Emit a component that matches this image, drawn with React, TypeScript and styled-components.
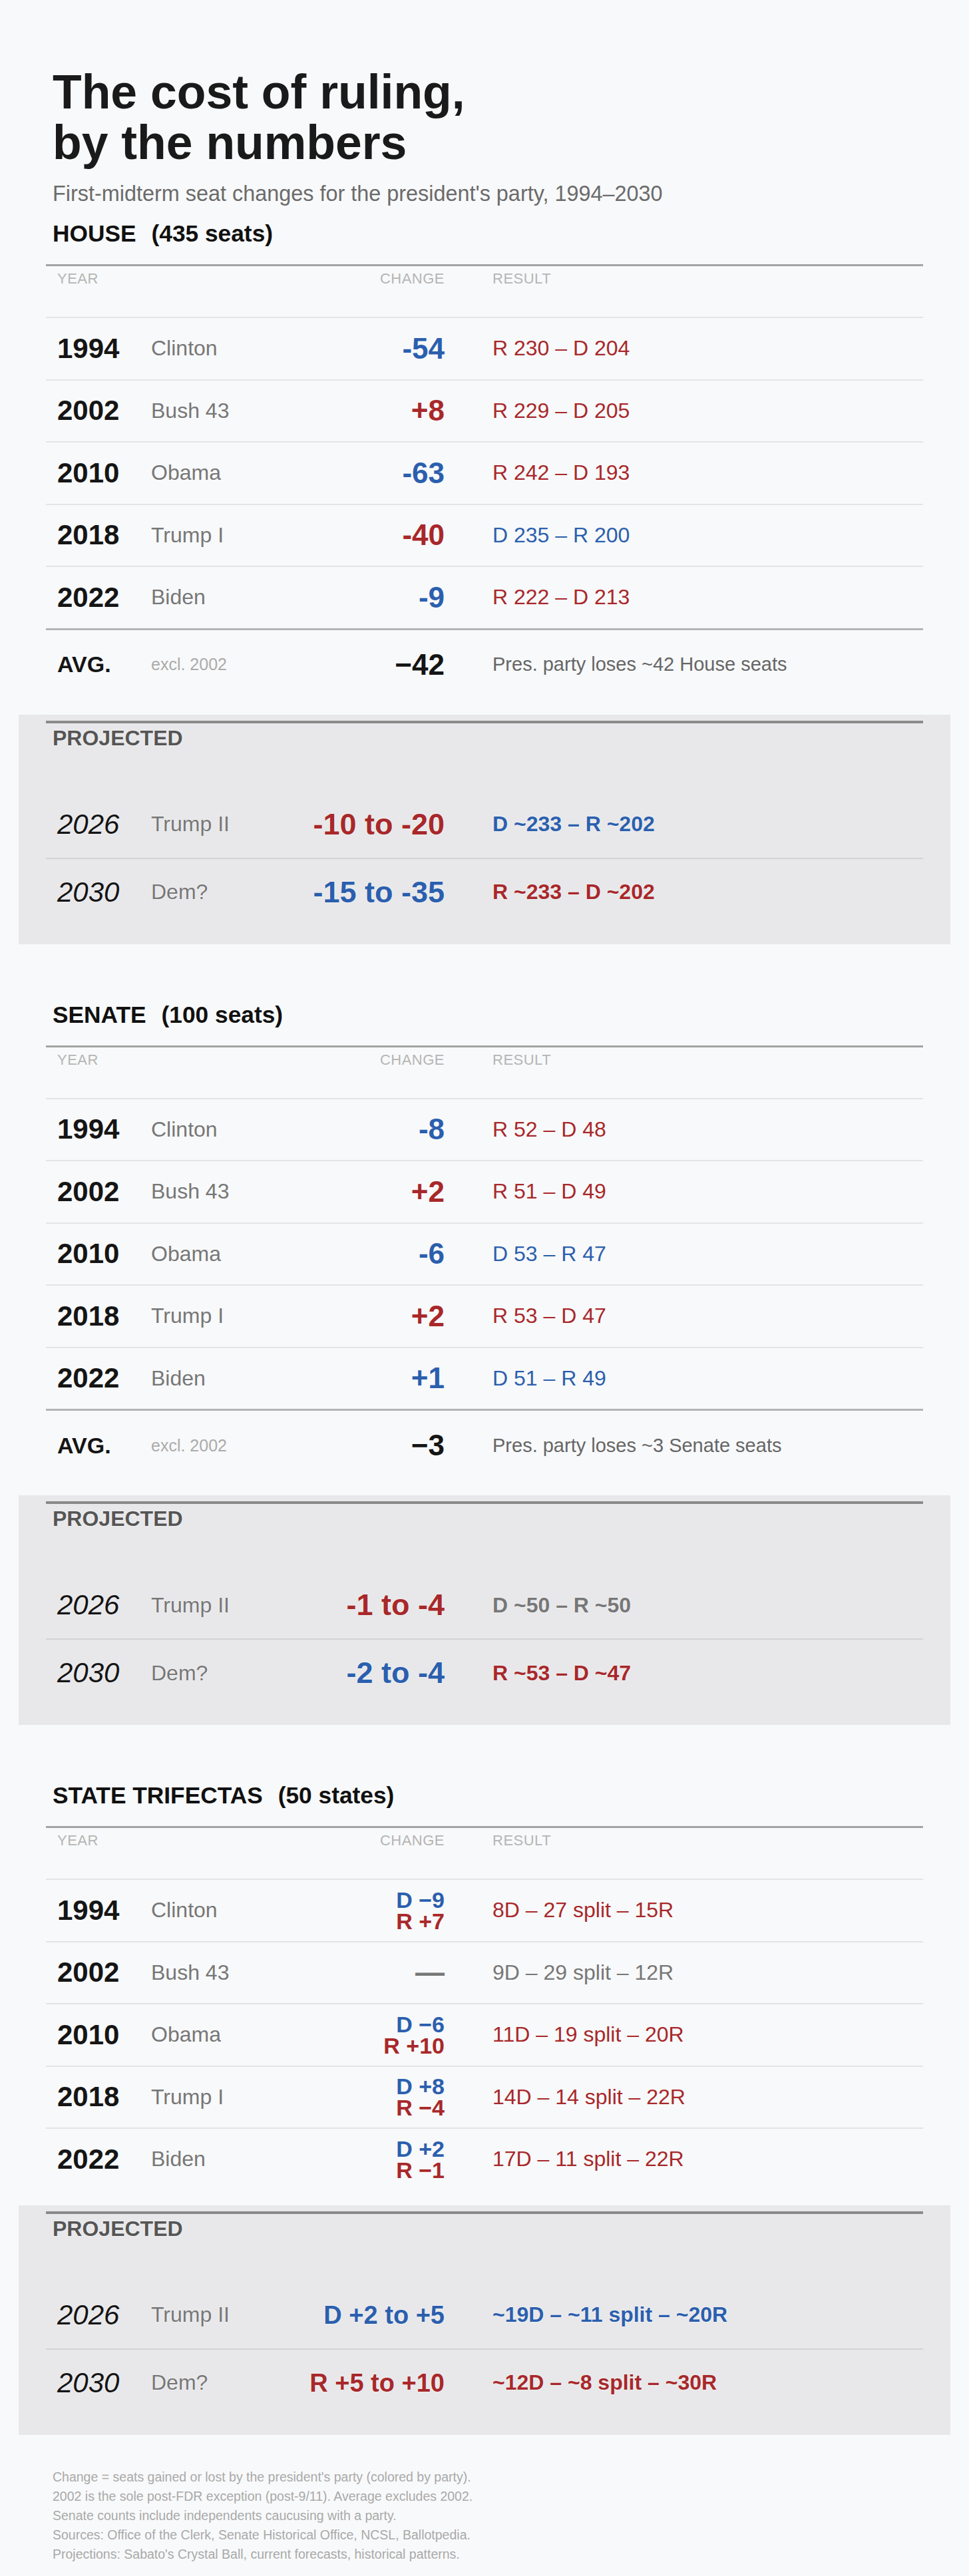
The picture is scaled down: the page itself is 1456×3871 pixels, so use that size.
import styled, { createGlobalStyle, css } from "styled-components";

type Party = "dem" | "rep" | "neutral";

const partyColor: Record<Party, string> = {
	dem: "#2b5fae",
	rep: "#a8282a",
	neutral: "#777777",
};

interface ChangeLine {
	text: string;
	party: Party;
}

interface HistoryRow {
	year: string;
	president: string;
	change: ChangeLine[];
	result: string;
	resultParty: Party;
}

interface ProjectedRow {
	year: string;
	president: string;
	change: string;
	changeParty: Party;
	result: string;
	resultParty: Party;
}

interface Chamber {
	title: string;
	count: string;
	rows: HistoryRow[];
	avg?: { value: string; note: string };
	projected: ProjectedRow[];
	compact?: boolean;
}

const one = (text: string, party: Party): ChangeLine[] => [{ text, party }];

const chambers: Chamber[] = [
	{
		title: "HOUSE",
		count: "(435 seats)",
		rows: [
			{ year: "1994", president: "Clinton", change: one("-54", "dem"), result: "R 230 – D 204", resultParty: "rep" },
			{ year: "2002", president: "Bush 43", change: one("+8", "rep"), result: "R 229 – D 205", resultParty: "rep" },
			{ year: "2010", president: "Obama", change: one("-63", "dem"), result: "R 242 – D 193", resultParty: "rep" },
			{ year: "2018", president: "Trump I", change: one("-40", "rep"), result: "D 235 – R 200", resultParty: "dem" },
			{ year: "2022", president: "Biden", change: one("-9", "dem"), result: "R 222 – D 213", resultParty: "rep" },
		],
		avg: { value: "−42", note: "Pres. party loses ~42 House seats" },
		projected: [
			{ year: "2026", president: "Trump II", change: "-10 to -20", changeParty: "rep", result: "D ~233 – R ~202", resultParty: "dem" },
			{ year: "2030", president: "Dem?", change: "-15 to -35", changeParty: "dem", result: "R ~233 – D ~202", resultParty: "rep" },
		],
	},
	{
		title: "SENATE",
		count: "(100 seats)",
		rows: [
			{ year: "1994", president: "Clinton", change: one("-8", "dem"), result: "R 52 – D 48", resultParty: "rep" },
			{ year: "2002", president: "Bush 43", change: one("+2", "rep"), result: "R 51 – D 49", resultParty: "rep" },
			{ year: "2010", president: "Obama", change: one("-6", "dem"), result: "D 53 – R 47", resultParty: "dem" },
			{ year: "2018", president: "Trump I", change: one("+2", "rep"), result: "R 53 – D 47", resultParty: "rep" },
			{ year: "2022", president: "Biden", change: one("+1", "dem"), result: "D 51 – R 49", resultParty: "dem" },
		],
		avg: { value: "−3", note: "Pres. party loses ~3 Senate seats" },
		projected: [
			{ year: "2026", president: "Trump II", change: "-1 to -4", changeParty: "rep", result: "D ~50 – R ~50", resultParty: "neutral" },
			{ year: "2030", president: "Dem?", change: "-2 to -4", changeParty: "dem", result: "R ~53 – D ~47", resultParty: "rep" },
		],
	},
	{
		title: "STATE TRIFECTAS",
		count: "(50 states)",
		compact: true,
		rows: [
			{
				year: "1994",
				president: "Clinton",
				change: [
					{ text: "D −9", party: "dem" },
					{ text: "R +7", party: "rep" },
				],
				result: "8D – 27 split – 15R",
				resultParty: "rep",
			},
			{ year: "2002", president: "Bush 43", change: one("—", "neutral"), result: "9D – 29 split – 12R", resultParty: "neutral" },
			{
				year: "2010",
				president: "Obama",
				change: [
					{ text: "D −6", party: "dem" },
					{ text: "R +10", party: "rep" },
				],
				result: "11D – 19 split – 20R",
				resultParty: "rep",
			},
			{
				year: "2018",
				president: "Trump I",
				change: [
					{ text: "D +8", party: "dem" },
					{ text: "R −4", party: "rep" },
				],
				result: "14D – 14 split – 22R",
				resultParty: "rep",
			},
			{
				year: "2022",
				president: "Biden",
				change: [
					{ text: "D +2", party: "dem" },
					{ text: "R −1", party: "rep" },
				],
				result: "17D – 11 split – 22R",
				resultParty: "rep",
			},
		],
		projected: [
			{ year: "2026", president: "Trump II", change: "D +2 to +5", changeParty: "dem", result: "~19D – ~11 split – ~20R", resultParty: "dem" },
			{ year: "2030", president: "Dem?", change: "R +5 to +10", changeParty: "rep", result: "~12D – ~8 split – ~30R", resultParty: "rep" },
		],
	},
];

const notes = [
	"Change = seats gained or lost by the president's party (colored by party).",
	"2002 is the sole post-FDR exception (post-9/11). Average excludes 2002.",
	"Senate counts include independents caucusing with a party.",
	"Sources: Office of the Clerk, Senate Historical Office, NCSL, Ballotpedia.",
	"Projections: Sabato's Crystal Ball, current forecasts, historical patterns.",
];

const GlobalStyle = createGlobalStyle`
	html, body {
		margin: 0;
		padding: 0;
		background: #f8f9fa;
	}
	body {
		font-family: "Liberation Sans", Arial, Helvetica, sans-serif;
		color: #1a1a1a;
	}
`;

const Page = styled.main`
	padding: 100px 28px 24px;
`;

const Intro = styled.header`
	padding: 0 51px;
`;

const Title = styled.h1`
	margin: 0;
	font-size: 71.5px;
	line-height: 76px;
	font-weight: 700;
	color: #1a1a1a;
`;

const Subtitle = styled.p`
	margin: 20px 0 0;
	font-size: 32.4px;
	line-height: 38px;
	color: #6b6b6b;
`;

const Section = styled.section`
	margin-top: 20px;

	& + & {
		margin-top: 85px;
	}
`;

const SectionTitle = styled.h2`
	margin: 0 0 25px;
	padding: 0 51px;
	font-size: 35.3px;
	line-height: 42px;
	font-weight: 700;
	color: #111111;
`;

const Count = styled.span`
	margin-left: 23px;
`;

const Table = styled.div`
	margin: 0 41px;
	border-top: 3px solid #a3a3a3;
`;

const gridColumns = css`
	display: grid;
	grid-template-columns: 141px 222px 219px 1fr;
	padding: 0 17px;
`;

const HeadRow = styled.div`
	${gridColumns};
	padding-top: 6px;
	padding-bottom: 45px;
	border-bottom: 2px solid #e4e4e6;
	font-size: 22px;
	line-height: 25px;
	color: #b5b5b5;
	letter-spacing: 0.5px;
`;

const ChangeHead = styled.span`
	grid-column: 3;
	text-align: right;
`;

const ResultHead = styled.span`
	grid-column: 4;
	padding-left: 72px;
`;

const Row = styled.div<{ $edge: "thin" | "thick" | "none" }>`
	${gridColumns};
	min-height: 91.5px;
	align-items: center;
	border-bottom: ${(p) =>
		p.$edge === "thin" ? "2px solid #e4e4e6" : p.$edge === "thick" ? "3px solid #b4b4b4" : "none"};
`;

const AvgRow = styled.div`
	${gridColumns};
	min-height: 104px;
	align-items: center;
`;

const Year = styled.span<{ $projected?: boolean }>`
	font-size: 42px;
	line-height: 48px;
	font-weight: ${(p) => (p.$projected ? 400 : 700)};
	font-style: ${(p) => (p.$projected ? "italic" : "normal")};
	color: #151515;
`;

const AvgLabel = styled.span`
	font-size: 34px;
	font-weight: 700;
	color: #151515;
`;

const President = styled.span`
	font-size: 32px;
	color: #777777;
`;

const Excl = styled.span`
	font-size: 25px;
	color: #ababab;
`;

const Change = styled.div`
	display: flex;
	flex-direction: column;
	align-items: flex-end;
	text-align: right;
`;

const ChangeText = styled.span<{ $party: Party; $size: number; $lead: number }>`
	font-size: ${(p) => p.$size}px;
	line-height: ${(p) => p.$lead}px;
	font-weight: 700;
	color: ${(p) => partyColor[p.$party]};
	white-space: nowrap;
`;

const AvgValue = styled.span`
	font-size: 44px;
	font-weight: 700;
	color: #151515;
	text-align: right;
`;

const Result = styled.span<{ $party: Party; $bold?: boolean }>`
	padding-left: 72px;
	font-size: 32px;
	font-weight: ${(p) => (p.$bold ? 700 : 400)};
	color: ${(p) => partyColor[p.$party]};
	white-space: nowrap;
`;

const AvgNote = styled.span`
	padding-left: 72px;
	font-size: 29px;
	color: #666666;
`;

const Projected = styled.div`
	margin-top: 23px;
	padding: 9px 41px 28px;
	background: #e8e8ea;
	text-shadow: 0 0 2px rgba(255, 255, 255, 0.9);
`;

const ProjectedInner = styled.div`
	border-top: 4px solid #8a8a8a;
`;

const ProjectedLabel = styled.div`
	margin: 4px 0 61px;
	padding-left: 10px;
	font-size: 32px;
	line-height: 37px;
	font-weight: 700;
	color: #555555;
`;

const ProjRow = styled.div<{ $last?: boolean }>`
	${gridColumns};
	min-height: 100px;
	align-items: center;
	border-bottom: ${(p) => (p.$last ? "none" : "2px solid #d3d3d6")};
`;

const Notes = styled.footer`
	margin-top: 49px;
	padding: 0 51px;
	font-size: 19.5px;
	line-height: 29px;
	color: #a9a9a9;
`;

const NoteLine = styled.p`
	margin: 0;
`;

const ChamberTable = ({ chamber }: { chamber: Chamber }) => {
	const { title, count, rows, avg, projected, compact } = chamber;

	return (
		<Section>
			<SectionTitle>
				{title}
				<Count>{count}</Count>
			</SectionTitle>
			<Table>
				<HeadRow>
					<span>YEAR</span>
					<ChangeHead>CHANGE</ChangeHead>
					<ResultHead>RESULT</ResultHead>
				</HeadRow>
				{rows.map((row, i) => {
					const last = i === rows.length - 1;
					const edge = last ? (avg ? "thick" : "none") : "thin";
					const stacked = row.change.length > 1;
					return (
						<Row key={row.year} $edge={edge}>
							<Year>{row.year}</Year>
							<President>{row.president}</President>
							<Change>
								{row.change.map((c) => (
									<ChangeText
										key={c.text}
										$party={c.party}
										$size={stacked ? 34 : 44}
										$lead={stacked ? 32 : 48}
									>
										{c.text}
									</ChangeText>
								))}
							</Change>
							<Result $party={row.resultParty}>{row.result}</Result>
						</Row>
					);
				})}
				{avg && (
					<AvgRow>
						<AvgLabel>AVG.</AvgLabel>
						<Excl>excl. 2002</Excl>
						<AvgValue>{avg.value}</AvgValue>
						<AvgNote>{avg.note}</AvgNote>
					</AvgRow>
				)}
			</Table>
			<Projected>
				<ProjectedInner>
					<ProjectedLabel>PROJECTED</ProjectedLabel>
					{projected.map((row, i) => (
						<ProjRow key={row.year} $last={i === projected.length - 1}>
							<Year $projected>{row.year}</Year>
							<President>{row.president}</President>
							<Change>
								<ChangeText $party={row.changeParty} $size={compact ? 38 : 45} $lead={50}>
									{row.change}
								</ChangeText>
							</Change>
							<Result $party={row.resultParty} $bold>
								{row.result}
							</Result>
						</ProjRow>
					))}
				</ProjectedInner>
			</Projected>
		</Section>
	);
};

export default function App() {
	return (
		<>
			<GlobalStyle />
			<Page>
				<Intro>
					<Title>
						The cost of ruling,
						<br />
						by the numbers
					</Title>
					<Subtitle>First-midterm seat changes for the president's party, 1994–2030</Subtitle>
				</Intro>
				{chambers.map((c) => (
					<ChamberTable key={c.title} chamber={c} />
				))}
				<Notes>
					{notes.map((n) => (
						<NoteLine key={n}>{n}</NoteLine>
					))}
				</Notes>
			</Page>
		</>
	);
}
